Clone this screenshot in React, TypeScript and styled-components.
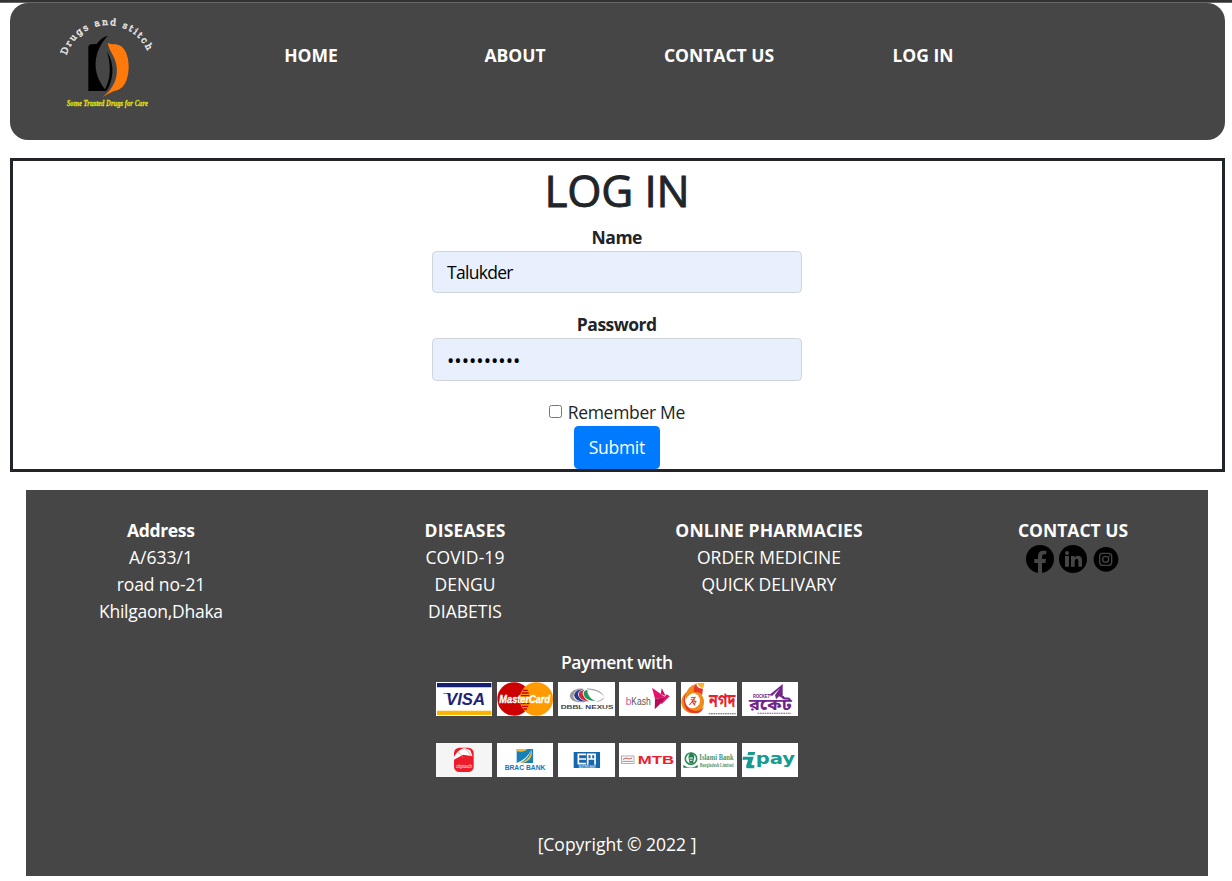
import React from "react";
import styled, { createGlobalStyle } from "styled-components";

const GlobalStyle = createGlobalStyle`
  *, *::before, *::after { box-sizing: border-box; }
  html, body { margin: 0; background: #fff; overflow: hidden; }
  body {
    font-family: "Open Sans", "Noto Sans", sans-serif;
    font-size: 17.5px;
    line-height: 27px;
    color: #212529;
  }
`;

const Page = styled.div`
  height: 881px;
  border-top: 2px solid #333;
  box-shadow: inset 0 1px 0 #686868;
  padding: 1px 7px 0 10px;
`;

const Header = styled.header`
  display: flex;
  height: 137px;
  border-radius: 18px;
  background: #464646;
`;

const Brand = styled.div`
  width: 199px;
  padding: 9px 0 0 40px;
`;

const Nav = styled.nav`
  display: grid;
  grid-template-columns: repeat(4, 204px);
  height: 54px;
  padding-top: 39px;
  text-align: center;
`;

const Label = styled.span<{ $track?: number; $bold?: boolean; $weight?: number }>`
  display: block;
  white-space: nowrap;
  font-weight: ${(p) => p.$weight ?? (p.$bold ? 700 : 400)};
  letter-spacing: ${(p) => p.$track ?? 0}px;
  margin-right: ${(p) => -(p.$track ?? 0)}px;
`;

const NavLink = styled.a`
  color: #fff;
  text-decoration: none;
`;

const LoginPanel = styled.main`
  display: flex;
  flex-direction: column;
  align-items: center;
  height: 314px;
  margin-top: 18px;
  padding-right: 1px;
  border: 3px solid #212529;
`;

const Title = styled.h1`
  margin: 0 0 9px;
  font-size: 44px;
  line-height: 59px;
  height: 54px;
  font-weight: 400;
  -webkit-text-stroke: 0.9px #212529;
  letter-spacing: -0.2px;
`;

const Field = styled.div`
  display: flex;
  flex-direction: column;
  align-items: center;
  height: 87px;
`;

const Input = styled.input`
  width: 370px;
  height: 42.4px;
  padding: 0 14px;
  border: 1px solid #ced4da;
  border-radius: 4.5px;
  background: #e8f0fe;
  color: #000;
  font: inherit;
  letter-spacing: -0.7px;
`;

const PasswordInput = styled(Input)`
  height: 43px;
  padding-top: 2px;
  font-size: 19.5px;
  letter-spacing: 0;
`;

const Remember = styled.label`
  display: flex;
  align-items: center;
  gap: 6px;
  height: 27px;
  margin-top: 1px;
`;

const Checkbox = styled.input`
  width: 13px;
  height: 13px;
  margin: 0 0 2px;
`;

const Submit = styled.button`
  width: 86px;
  height: 43px;
  flex: none;
  padding: 0;
  border: 0;
  border-radius: 4.5px;
  background: #007bff;
  color: #fff;
  font: inherit;
  text-align: center;
`;

const Footer = styled.footer`
  height: 386px;
  margin: 18px 17px 0 16px;
  padding-top: 27px;
  background: #464646;
  color: #fff;
  text-align: center;
`;

const Columns = styled.div`
  display: grid;
  grid-template-columns: repeat(4, 304px);
  height: 132px;
  margin: 0 -17px;
`;

const Column = styled.section``;

const Socials = styled.div`
  display: flex;
  justify-content: center;
  align-items: center;
  gap: 5px;
  height: 28px;
  margin-top: 1px;
`;

const Tiles = styled.div`
  display: grid;
  grid-template-columns: repeat(6, 56.4px);
  grid-auto-rows: 34px;
  justify-content: center;
  gap: 27px 4.8px;
  height: 95px;
  margin: 6px 0 54px;
`;

const Tile = styled.svg`
  display: block;
  width: 100%;
  height: 34px;
  background: #fff;
`;

const sans = "Liberation Sans, sans-serif";
const serif = "Liberation Serif, serif";

type MarkProps = {
  x: number; y: number; w: number; size: number; fill: string;
  family?: string; weight?: number; italic?: boolean; children: string;
};
const Mark = ({ x, y, w, size, fill, family = sans, weight = 700, italic, children }: MarkProps) => (
  <text x={x} y={y} fontSize={size} fill={fill} fontFamily={family} fontWeight={weight}
    fontStyle={italic ? "italic" : "normal"} textLength={w} lengthAdjust="spacingAndGlyphs">{children}</text>
);

const BrandLogo = () => (
  <svg width="115" height="105" viewBox="0 0 345 315">
    <defs><path id="arc" d="M49 130A130 130 0 0 1 297 130" /></defs>
    <text fontFamily="DejaVu Serif, serif" fontSize="27" fill="#e4e4e4" stroke="#e4e4e4" strokeWidth="1.6">
      <textPath href="#arc" textLength="314">Drugs and stitch</textPath>
    </text>
    <path fill="#000" d="M115 106Q115 97 125 97L140 96Q153 77 173 71Q151 96 142 122C128 170 143 202 165 232Q182 200 179 162Q178 142 171 118Q190 150 187 184Q185 214 169 237H115Z" />
    <path fill="#ff7a0a" d="M173 93Q180 97 198 97C226 101 236 133 236 166C235 207 220 235 192 237Q178 243 157 256C193 228 204 195 200 164C197 134 178 119 173 93Z" />
    <g stroke="#dede14" strokeWidth="1">
      <Mark x={50} y={281} w={244} size={25} fill="#dede14" family={serif} italic>Some Trusted Drugs for Care</Mark>
    </g>
  </svg>
);

const Facebook = () => (
  <svg width="28" height="28" viewBox="0 0 84 84">
    <circle cx="42" cy="42" r="42" fill="#000" />
    <path fill="#464646" d="M36 84V54H25V42H36V34Q36 17 52 17H61V28H55Q48 28 48 35V42H60L58 54H48V84Z" />
  </svg>
);

const LinkedIn = () => (
  <svg width="28" height="28" viewBox="0 0 84 84">
    <circle cx="42" cy="42" r="42" fill="#000" />
    <circle cx="24" cy="24" r="6" fill="#464646" />
    <path fill="#464646" d="M18 33H30V65H18ZM36 33H47V38Q51 32 57 32Q69 32 69 46V65H58V48Q58 41 53 41Q47 41 47 49V65H36Z" />
  </svg>
);

const Instagram = () => (
  <svg width="28" height="28" viewBox="0 0 84 84">
    <circle cx="42" cy="43" r="37" fill="#000" />
    <g fill="none" stroke="#464646" strokeWidth="4">
      <rect x="23" y="25" width="36" height="36" rx="9" />
      <circle cx="41" cy="43" r="9" />
    </g>
    <circle cx="52" cy="33" r="2.5" fill="#464646" />
  </svg>
);

const tiles: React.ReactNode[] = [
  <>
    <path fill="#14206f" d="M3 3H166V16H3Z" /><path fill="#fab500" d="M3 86H166V99H3Z" />
    <Mark x={30} y={70} w={117} size={50} fill="#1b2376" italic>VISA</Mark>
    <path fill="#1b2376" d="M22 33H42L45 42Q35 33 22 35Z" />
  </>,
  <>
    <circle cx="51" cy="51" r="50" fill="#c00" /><circle cx="118" cy="51" r="50" fill="#ff9b00" />
    <path stroke="#c00" strokeWidth="4" d="M77 25H92M74 33H95M72 41H97M72 65H97M75 73H94M79 81H90" />
    <g stroke="#fff" strokeWidth="1">
      <Mark x={7} y={63} w={152} size={32} fill="#fff" italic>MasterCard</Mark>
    </g>
  </>,
  <>
    <path fill="#999" d="M35 42Q40 18 78 19Q47 24 46 42Q45 58 80 60Q39 64 35 42Z" />
    <path fill="#263c91" d="M48 40Q51 22 78 21Q58 27 60 39Q65 54 84 59Q51 60 48 40Z" />
    <path fill="#d6263a" d="M62 38Q61 26 80 23Q71 31 75 39Q81 53 94 59Q64 55 62 38Z" />
    <path fill="#20985a" d="M77 37Q75 27 88 23Q87 33 93 42Q99 52 112 57Q80 56 77 37Z" />
    <path fill="#aaa" d="M87 19Q130 21 140 45Q124 26 87 22ZM140 46Q134 58 112 60Q130 54 140 46Z" />
    <Mark x={8} y={82} w={158} size={18} fill="#444">DBBL NEXUS</Mark>
  </>,
  <>
    <Mark x={20} y={68} w={17} size={35} fill="#d35b9a" weight={400}>b</Mark>
    <Mark x={37} y={68} w={58} size={35} fill="#555" weight={400}>Kash</Mark>
    <path fill="#e2136e" d="M99 17L139 46L108 51Z" />
    <path fill="#c41262" d="M128 19L140 42L125 36Z" />
    <path fill="#e2136e" d="M136 45L143 37L152 43L128 66L120 60Z" />
    <path fill="#b70d58" d="M108 51L138 46L124 65L107 82Z" />
  </>,
  <>
    <circle cx="35" cy="60" r="34" fill="#f28a16" /><circle cx="34" cy="56" r="23" fill="#fff" />
    <path fill="#e73628" d="M17 29C5 45 5 65 18 84C35 99 62 98 68 75C57 90 32 91 21 76C9 61 10 45 17 29Z" />
    <path fill="#f28a16" d="M14 38Q20 14 42 6Q36 20 42 32Q22 34 14 54Z" />
    <path fill="#e73628" d="M40 30Q34 16 46 4Q46 20 66 20L63 40Q55 28 40 30Z" />
    <path fill="#ffb125" d="M49 3L70 3L67 17Q54 18 49 3Z" />
    <path fill="none" stroke="#e73628" strokeWidth="3" d="M30 47L42 46L34 57L45 59L38 69M29 53L42 54M25 69L34 59L42 70" />
    <Mark x={84} y={76} w={79} size={58} fill="#e4232d" family="Noto Sans Bengali, sans-serif">নগদ</Mark>
    <path stroke="#555" strokeWidth="3" strokeDasharray="5 2" d="M83 95H164" />
  </>,
  <>
    <Mark x={33} y={49} w={51} size={15} fill="#68217a">ROCKET</Mark>
    <path fill="#70268a" d="M81 40L122 6L122 48L111 43L102 52L99 39L114 18L91 41Z" />
    <Mark x={21} y={85} w={128} size={48} fill="#70268a" family="Noto Sans Bengali, sans-serif">রকেট</Mark>
    <path stroke="#8a4fa0" strokeWidth="3" strokeDasharray="5 2" d="M47 94H147" />
  </>,
  <>
    <rect width="170" height="102" fill="#f5f5f5" /><rect x="54" y="14" width="59" height="73" rx="16" fill="#ed1c2b" />
    <path fill="#fff" d="M54 41Q66 20 85 15L102 21Q107 31 109 40L81 35L54 50Z" />
    <path fill="none" stroke="#e68b91" strokeWidth="2" d="M65 28Q75 32 81 44M84 15Q99 24 105 39" />
    <Mark x={61} y={74} w={47} size={16} fill="#fff" weight={400}>citytouch</Mark>
  </>,
  <>
    <rect x="59" y="18" width="49" height="42" fill="#1680b8" /><path fill="#f7b72e" d="M59 25Q82 29 91 18H59ZM59 60Q97 57 104 20Q110 50 77 60Z" />
    <path fill="#e5f0ec" d="M59 59Q89 50 104 19Q96 46 70 60Z" />
    <Mark x={23} y={81} w={122} size={21} fill="#1874b8">BRAC BANK</Mark>
  </>,
  <>
    <rect x="47" y="27" width="79" height="48" fill="#1765ad" />
    <path fill="none" stroke="#fff" strokeWidth="5" d="M84 34H61V62H84M61 48H84M89 65V34H111V65M89 48H111M100 35V48" />
    <Mark x={62} y={74} w={51} size={9} fill="#c9e3f7">EASTERN BANK</Mark>
  </>,
  <>
    <rect x="7" y="39" width="38" height="22" fill="#fff" stroke="#888" strokeWidth="2" />
    <path fill="none" stroke="#dc5b60" strokeWidth="3" d="M11 49L22 45L29 48L40 45" /><path stroke="#70a385" strokeWidth="3" d="M10 55H42" />
    <Mark x={56} y={62} w={109} size={34} fill="#ed1c2e">MTB</Mark>
  </>,
  <>
    <circle cx="30" cy="47" r="17" fill="none" stroke="#328a5c" strokeWidth="5" />
    <path fill="#238050" d="M22 42Q23 33 31 28Q40 35 40 42L36 61H26ZM7 66Q29 81 50 66V74H7Z" />
    <path stroke="#fff" strokeWidth="3" d="M25 45H36M27 52H34" />
    <Mark x={55} y={52} w={103} size={26} fill="#4b9670" family={serif}>Islami Bank</Mark>
    <Mark x={56} y={73} w={101} size={19} fill="#4b9670" family={serif}>Bangladesh Limited</Mark>
  </>,
  <>
    <path fill="#159b91" d="M19 27H40L37 36H16ZM3 41H35L28 64Q28 67 38 67L36 76H16Q11 75 13 67L18 50H1Z" />
    <Mark x={41} y={63} w={118} size={50} fill="#159b91" family="DejaVu Sans, sans-serif">pay</Mark>
  </>,
];

type Line = [string, number];
const columns: { title: Line; lines: Line[] }[] = [
  { title: ["Address", -0.35], lines: [["A/633/1", 0], ["road no-21", -0.1], ["Khilgaon,Dhaka", -0.25]] },
  { title: ["DISEASES", 0.2], lines: [["COVID-19", 0.1], ["DENGU", 0], ["DIABETIS", 0]] },
  { title: ["ONLINE PHARMACIES", 0.12], lines: [["ORDER MEDICINE", 0], ["QUICK DELIVARY", -0.1]] },
  { title: ["CONTACT US", 0], lines: [] },
];
const links = ["HOME", "ABOUT", "CONTACT US", "LOG IN"];

export default function App() {
  return (
    <Page>
      <GlobalStyle />
      <Header>
        <Brand><BrandLogo /></Brand>
        <Nav>
          {links.map((text) => (
            <NavLink key={text}><Label $bold>{text}</Label></NavLink>
          ))}
        </Nav>
      </Header>
      <LoginPanel>
        <Title>LOG IN</Title>
        <Field><Label $bold $track={-0.5}>Name</Label><Input defaultValue="Talukder" /></Field>
        <Field><Label $bold $track={-0.5}>Password</Label><PasswordInput type="password" defaultValue="talukder12" /></Field>
        <Remember><Checkbox type="checkbox" /><Label $track={-0.3}>Remember Me</Label></Remember>
        <Submit><Label $track={-0.3}>Submit</Label></Submit>
      </LoginPanel>
      <Footer>
        <Columns>
          {columns.map((c) => (
            <Column key={c.title[0]}>
              <Label $bold $track={c.title[1]}>{c.title[0]}</Label>
              {c.lines.map(([text, track]) => <Label key={text} $track={track}>{text}</Label>)}
              {c.lines.length === 0 && <Socials><Facebook /><LinkedIn /><Instagram /></Socials>}
            </Column>
          ))}
        </Columns>
        <Label $weight={600} $track={-0.42}>Payment with</Label>
        <Tiles>
          {tiles.map((art, i) => <Tile key={i} viewBox="0 0 169 102" preserveAspectRatio="none">{art}</Tile>)}
        </Tiles>
        <Label>[Copyright © 2022 ]</Label>
      </Footer>
    </Page>
  );
}
